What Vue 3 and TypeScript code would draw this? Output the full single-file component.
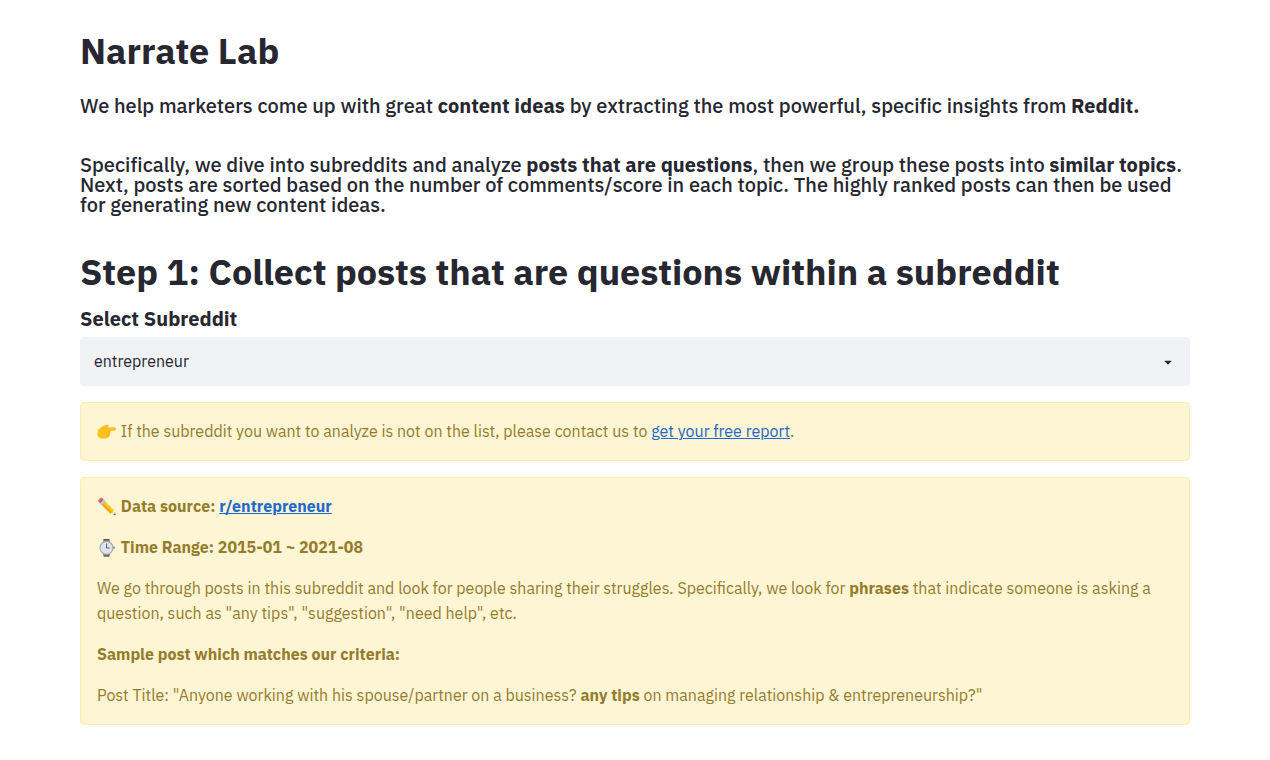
<script setup lang="ts">
import { ref } from 'vue'

const subreddit = ref<string>('entrepreneur')
const timeRange = ref<string>('2015-01 ~ 2021-08')
</script>

<template>
  <main class="page">
    <h1 class="title">Narrate Lab</h1>
    <p class="lead">
      We help marketers come up with great <b>content ideas</b> by extracting the most powerful, specific insights from <b>Reddit.</b>
    </p>
    <p class="lead details">
      Specifically, we dive into subreddits and analyze <b>posts that are questions</b>, then we group these posts into
      <b>similar topics</b>. Next, posts are sorted based on the number of comments/score in each topic. The highly ranked
      posts can then be used for generating new content ideas.
    </p>
    <h1 class="title step">Step 1: Collect posts that are questions within a subreddit</h1>
    <h3 class="label">Select Subreddit</h3>
    <div class="select" role="combobox" aria-expanded="false">
      <span>{{ subreddit }}</span>
      <svg class="caret" viewBox="0 0 24 24" width="16" height="16" aria-hidden="true">
        <path
          fill-rule="evenodd"
          clip-rule="evenodd"
          d="M12.7071 15.2929L17.1464 10.8536C17.4614 10.5386 17.2383 10 16.7929 10L7.20711 10C6.76165 10 6.53857 10.5386 6.85355 10.8536L11.2929 15.2929C11.6834 15.6834 12.3166 15.6834 12.7071 15.2929Z"
        />
      </svg>
    </div>
    <section class="alert">
      <p>
        <svg class="emoji" viewBox="0 0 20 20" aria-hidden="true">
          <path
            fill="#fcc21b"
            d="M.6 10.2C.6 8.2 3 7.6 4.4 6.2 5.8 4.7 8.2 3.9 10.6 3.8 12 3.8 12.2 5.2 11.2 5.8L9.8 6.6 17.6 6.3C19.4 6.3 19.4 9 17.6 9.2L13.4 9.6C14 10.4 13.8 11.6 13 12 13.5 13 13.2 14 12.4 14.4 12.7 15.5 12 16.5 10.9 16.7 8.6 17.7 5.4 17.8 3.6 17.2 1.8 16.8.6 15.4.6 13.8Z"
          />
          <path
            fill="none"
            stroke="#f9a825"
            stroke-width=".6"
            d="M18.8 8.2C18.5 8.9 18.2 9.1 17.6 9.2L10.8 9.8M13 12 9.7 12.2M12.4 14.4 9.3 14.5M8.4 8.8C9.2 8.1 9.5 7.2 10.6 6.6"
          />
        </svg>
        If the subreddit you want to analyze is not on the list, please contact us to <a href="#">get your free report</a>.
      </p>
    </section>
    <section class="alert">
      <p><b>✏️ Data source: <a href="#">r/{{ subreddit }}</a></b></p>
      <p>
        <b>
          <svg class="emoji" viewBox="0 0 20 20" aria-hidden="true">
            <path fill="#8d746b" d="M5.6 5.5 6.8 2H12.2L13.4 5.5V16L12.2 19.6H6.8L5.6 16Z" />
            <path fill="#6d5048" d="M6.8 2H12.2L12.5 3H6.5ZM6.5 18.6H12.5L12.2 19.6H6.8Z" />
            <rect x="16" y="9.6" width="1.8" height="2.2" rx=".6" fill="#78858c" />
            <circle cx="9.5" cy="10.8" r="7.1" fill="#9eabb2" />
            <circle cx="9.5" cy="10.8" r="5.9" fill="#dfe5e9" />
            <path fill="none" stroke="#44545c" stroke-width=".9" d="M9.5 6.4V11H12.8" />
          </svg>
          Time Range: {{ timeRange }}
        </b>
      </p>
      <p>
        We go through posts in this subreddit and look for people sharing their struggles. Specifically, we look for
        <b>phrases</b> that indicate someone is asking a question, such as "any tips", "suggestion", "need help", etc.
      </p>
      <p><b>Sample post which matches our criteria:</b></p>
      <p>
        Post Title: "Anyone working with his spouse/partner on a business? <b>any tips</b> on managing relationship &amp;
        entrepreneurship?"
      </p>
    </section>
  </main>
</template>

<style>
body {
  background: #fff;
}
</style>

<style scoped>
.page {
  box-sizing: border-box;
  height: 760px;
  overflow: hidden;
  padding: 33px 80px 0;
  font-family: 'IBM Plex Sans', 'Open Sans', sans-serif;
  font-size: 16px;
  line-height: 25px;
  color: #262730;
}

b {
  font-weight: 700;
}

.title {
  margin: 0;
  font-size: 36px;
  font-weight: 700;
  line-height: 36px;
}

.lead {
  margin: 27px 0 0;
  font-size: 20px;
  font-weight: 500;
  line-height: 20px;
  letter-spacing: 0.003px;
  font-variant-ligatures: common-ligatures;
}

.details {
  margin-top: 39px;
}

.step {
  margin-top: 39px;
}

.label {
  margin: 19px 0 0;
  font-size: 20px;
  font-weight: 700;
  line-height: 20px;
}

.select {
  display: flex;
  align-items: center;
  justify-content: space-between;
  box-sizing: border-box;
  height: 49px;
  margin-top: 8px;
  padding: 0 14px;
  border-radius: 4px;
  background: #f0f2f6;
}

.caret {
  fill: #262730;
}

.emoji {
  width: 20px;
  height: 20px;
  vertical-align: -4px;
}

.alert {
  margin-top: 16px;
  padding: 16px;
  border: 1px solid #ffecac;
  border-radius: 4px;
  background: #fef5d4;
  color: #947c2d;
}

.alert p {
  margin: 0;
}

.alert p + p {
  margin-top: 16px;
}

.alert a {
  color: #2468cb;
  text-decoration: underline;
}
</style>
